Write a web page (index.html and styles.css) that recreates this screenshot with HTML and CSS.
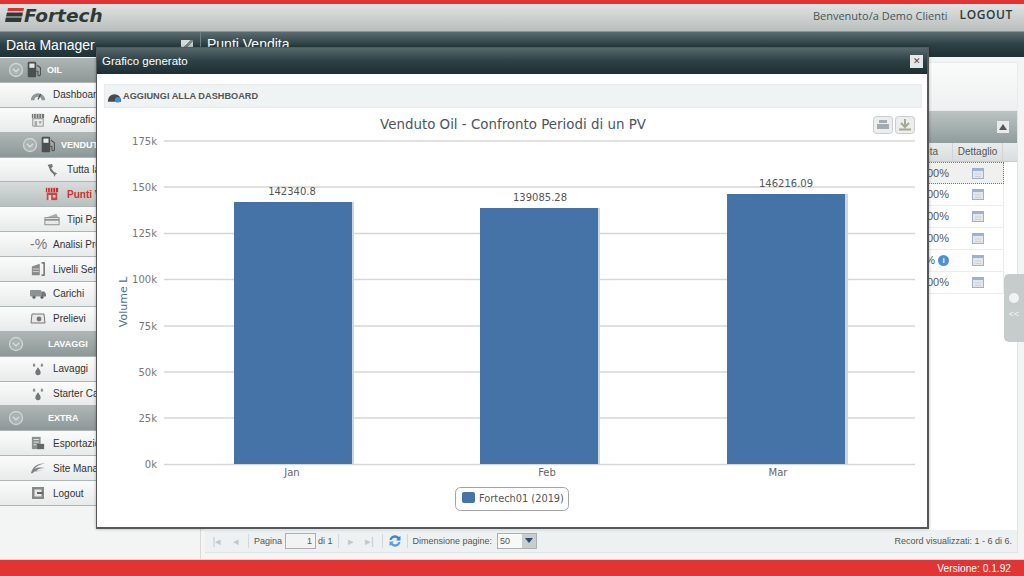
FILE: index.html
```html
<!DOCTYPE html>
<html lang="en">

<head>
    <meta charset="UTF-8">
    <meta name="viewport" content="width=device-width, initial-scale=1.0">
    <title>Fortech - Data Manager</title>
    <link rel="stylesheet" href="styles.css">
</head>

<body>
    <svg class="icon-defs" aria-hidden="true">
        <symbol id="i-chevron" viewBox="0 0 16 16">
            <circle cx="8" cy="8" r="6.5" fill="#aab3b2" stroke="#cfd5d4" stroke-width="1.3" />
            <path d="M4.8 6.8 8 9.8l3.2-3" fill="none" stroke="#d5dad9" stroke-width="1.5" />
        </symbol>
        <symbol id="i-pump" viewBox="0 0 20 20">
            <rect x="2" y="1" width="10" height="18" rx="1.5" fill="#4a4f50" />
            <rect x="4" y="3" width="6" height="5" fill="#e6e9e9" />
            <path d="M13 5l4 3v8c0 2-3 2-3 0v-4h-2" fill="none" stroke="#4a4f50" stroke-width="1.2" />
        </symbol>
        <symbol id="i-gauge" viewBox="0 0 18 14">
            <path d="M1 13a8 8 0 0 1 16 0h-4a4 4 0 0 0-8 0z" fill="#8f9696" />
            <path d="M9 12l3-6" stroke="#4e5454" stroke-width="1.4" />
        </symbol>
        <symbol id="i-shop" viewBox="0 0 16 16">
            <path d="M1 1h14v5H1z" fill="#777" />
            <path d="M3 1v5M6 1v5M9 1v5M12 1v5" stroke="#ddd" />
            <path d="M2 6.5h12V15H2z" fill="#eee" stroke="#888" />
            <path d="M4 9h3v6H4zM9 9h3v3H9z" fill="#aaa" />
        </symbol>
        <symbol id="i-shop-red" viewBox="0 0 16 16">
            <path d="M1 1h14v5H1z" fill="#c4302f" />
            <path d="M3 1v5M6 1v5M9 1v5M12 1v5" stroke="#f0c0c0" />
            <path d="M2 6.5h12V15H2z" fill="#c4484a" />
            <path d="M4 9h3v6H4zM9 9h3v3H9z" fill="#f2d6d6" />
        </symbol>
        <symbol id="i-italy" viewBox="0 0 16 16">
            <path d="M3 2l5-1 1 3-2 2 3 4 4 2-2 1-1 3-1-3-4-4-1-3z" fill="#777" />
        </symbol>
        <symbol id="i-card" viewBox="0 0 18 14">
            <path d="M1 6l13-5 2 4z" fill="#aaa" />
            <rect x="1" y="5.5" width="16" height="8" fill="#e8e8e8" stroke="#888" />
            <path d="M1 8h16" stroke="#777" stroke-width="1.5" />
        </symbol>
        <symbol id="i-tank" viewBox="0 0 16 16">
            <path d="M1 5l9-3v13H1z" fill="#888" />
            <path d="M2 8h7M2 11h7" stroke="#ddd" />
            <path d="M12 1h3v14h-3" fill="none" stroke="#555" stroke-width="1.4" />
        </symbol>
        <symbol id="i-truck" viewBox="0 0 20 12">
            <rect x="0" y="1" width="14" height="8" rx="1" fill="#8d9393" />
            <path d="M14 3h4l2 3v3h-6z" fill="#777" />
            <circle cx="5" cy="10" r="2" fill="#666" />
            <circle cx="15" cy="10" r="2" fill="#666" />
        </symbol>
        <symbol id="i-cash" viewBox="0 0 16 12">
            <path d="M2 1h12l1 9H1z" fill="#e8e8e8" stroke="#777" />
            <circle cx="9" cy="6" r="2.4" fill="#777" />
        </symbol>
        <symbol id="i-drops" viewBox="0 0 14 16">
            <path d="M7 6c2 3 3 4 3 6a3 3 0 0 1-6 0c0-2 1-3 3-6z" fill="#707777" />
            <path d="M2.5 1c1 1.5 1.5 2 1.5 3a1.5 1.5 0 0 1-3 0c0-1 .5-1.5 1.500-3zM11.5 1c1 1.5 1.5 2 1.5 3a1.5 1.5 0 0 1-3 0c0-1 .5-1.5 1.5-3z" fill="#8b9292" />
        </symbol>
        <symbol id="i-export" viewBox="0 0 16 16">
            <path d="M1 1h10v14H1z" fill="#8b9090" />
            <path d="M3 4h6M3 7h6M3 10h3" stroke="#eee" />
            <rect x="7" y="9" width="8" height="6" fill="#666" />
        </symbol>
        <symbol id="i-eye" viewBox="0 0 18 14">
            <path d="M1 13C3 5 9 1 17 2 11 3 7 5 5 8c3-2 8-2 12-1-5 0-8 1-10 3l7 0-9 1-2 2z" fill="#7d8484" />
        </symbol>
        <symbol id="i-exit" viewBox="0 0 14 14">
            <rect x="1" y="1" width="12" height="12" fill="#888" />
            <rect x="3.5" y="3.5" width="7" height="7" fill="#e8e8e8" />
            <path d="M6 7h6" stroke="#666" stroke-width="2" />
        </symbol>
        <symbol id="i-detail" viewBox="0 0 12 11">
            <rect x=".5" y=".5" width="11" height="10" fill="#e3e6ea" stroke="#9db0cf" />
            <rect x="1" y="1" width="10" height="2" fill="#9db3d6" />
            <path d="M3 6h6M3 8.500h6" stroke="#cdd1d6" />
        </symbol>
    </svg>

    <div class="top-line"></div>
    <header class="app-header">
        <div class="logo">
            <svg class="logo-mark" viewBox="0 0 19 14" aria-hidden="true">
                <path d="M3 0h16l-.6 3H2.4z" fill="#d9322f" />
                <path d="M2 4.5h16l-.8 4H1z" fill="#2f3a38" />
                <path d="M.8 9.500h16l-.9 4.500H0z" fill="#2f3a38" />
            </svg>
            <span class="logo-text">Fortech</span>
        </div>
        <div class="user-box">
            <span class="welcome">Benvenuto/a Demo Clienti</span>
            <a class="logout-link">LOGOUT</a>
        </div>
    </header>

    <div class="title-bar">
        <div class="title-left">
            <span>Data Manager</span>
            <span class="collapse-btn"></span>
        </div>
        <div class="title-right">Punti Vendita</div>
    </div>

    <div class="app-body">
        <nav class="sidebar">
            <div class="menu-group"><svg class="chev"><use href="#i-chevron" /></svg><svg class="ico-pump"><use href="#i-pump" /></svg><span>OIL</span></div>
            <div class="menu-row"><svg class="ico"><use href="#i-gauge" /></svg><span>Dashboard</span></div>
            <div class="menu-row"><svg class="ico"><use href="#i-shop" /></svg><span>Anagrafica</span></div>
            <div class="menu-group sub"><svg class="chev"><use href="#i-chevron" /></svg><svg class="ico-pump"><use href="#i-pump" /></svg><span>VENDUTO</span></div>
            <div class="menu-row sub"><svg class="ico"><use href="#i-italy" /></svg><span>Tutta la rete</span></div>
            <div class="menu-row sub active"><svg class="ico"><use href="#i-shop-red" /></svg><span>Punti Vendita</span></div>
            <div class="menu-row sub"><svg class="ico"><use href="#i-card" /></svg><span>Tipi Pagamento</span></div>
            <div class="menu-row"><span class="ico-text">-%</span><span>Analisi Prezzi</span></div>
            <div class="menu-row"><svg class="ico"><use href="#i-tank" /></svg><span>Livelli Serbatoi</span></div>
            <div class="menu-row"><svg class="ico"><use href="#i-truck" /></svg><span>Carichi</span></div>
            <div class="menu-row"><svg class="ico"><use href="#i-cash" /></svg><span>Prelievi</span></div>
            <div class="menu-group"><svg class="chev"><use href="#i-chevron" /></svg><span class="no-ico">LAVAGGI</span></div>
            <div class="menu-row"><svg class="ico"><use href="#i-drops" /></svg><span>Lavaggi</span></div>
            <div class="menu-row"><svg class="ico"><use href="#i-drops" /></svg><span>Starter Card</span></div>
            <div class="menu-group"><svg class="chev"><use href="#i-chevron" /></svg><span class="no-ico">EXTRA</span></div>
            <div class="menu-row"><svg class="ico"><use href="#i-export" /></svg><span>Esportazioni</span></div>
            <div class="menu-row"><svg class="ico"><use href="#i-eye" /></svg><span>Site Manager</span></div>
            <div class="menu-row"><svg class="ico"><use href="#i-exit" /></svg><span>Logout</span></div>
        </nav>

        <main class="content">
            <div class="filter-box"></div>
            <section class="grid">
                <div class="grid-caption"><span class="caption-btn"></span></div>
                <div class="grid-head">
                    <div class="cell-main">Venduta</div>
                    <div class="cell-detail">Dettaglio</div>
                </div>
                <div class="grid-row selected"><div class="cell-main">100%</div><div class="cell-detail"><svg class="detail-ico"><use href="#i-detail" /></svg></div></div>
                <div class="grid-row"><div class="cell-main">100%</div><div class="cell-detail"><svg class="detail-ico"><use href="#i-detail" /></svg></div></div>
                <div class="grid-row"><div class="cell-main">100%</div><div class="cell-detail"><svg class="detail-ico"><use href="#i-detail" /></svg></div></div>
                <div class="grid-row"><div class="cell-main">100%</div><div class="cell-detail"><svg class="detail-ico"><use href="#i-detail" /></svg></div></div>
                <div class="grid-row"><div class="cell-main with-info">%<span class="info-dot">i</span></div><div class="cell-detail"><svg class="detail-ico"><use href="#i-detail" /></svg></div></div>
                <div class="grid-row"><div class="cell-main">100%</div><div class="cell-detail"><svg class="detail-ico"><use href="#i-detail" /></svg></div></div>
                <div class="grid-fill"></div>
                <div class="pager">
                    <span class="pg-arrow">|&#9666;</span>
                    <span class="pg-arrow">&#9666;</span>
                    <span class="pg-sep"></span>
                    <span>Pagina</span>
                    <span class="pg-input">1</span>
                    <span>di 1</span>
                    <span class="pg-sep"></span>
                    <span class="pg-arrow">&#9656;</span>
                    <span class="pg-arrow">&#9656;|</span>
                    <span class="pg-sep"></span>
                    <svg class="pg-refresh" viewBox="0 0 14 14" aria-hidden="true">
                        <path d="M1.5 6a5.5 5.5 0 0 1 9.5-3l1.5-1v4.5H8L9.5 5a3.5 3.5 0 0 0-6 1z" fill="#3f86c9" />
                        <path d="M12.5 8a5.5 5.5 0 0 1-9.5 3l-1.5 1V7.5H6L4.5 9a3.5 3.5 0 0 0 6-1z" fill="#5aa0dc" />
                    </svg>
                    <span class="pg-sep"></span>
                    <span>Dimensione pagine:</span>
                    <span class="pg-select"><span class="pg-value">50</span><span class="pg-drop"></span></span>
                    <span class="pg-record">Record visualizzati: 1 - 6 di 6.</span>
                </div>
            </section>
        </main>
    </div>

    <footer class="app-footer">Versione: 0.1.92</footer>

    <div class="slide-tab"><span class="slide-knob"></span><span class="slide-arrows">&lt;&lt;</span></div>

    <div class="modal">
        <div class="modal-title">
            <span>Grafico generato</span>
            <span class="modal-close">&#10005;</span>
        </div>
        <div class="modal-toolbar">
            <svg class="add-ico" viewBox="0 0 16 13" aria-hidden="true">
                <path d="M1 11a7 7 0 0 1 14 0v1H1z" fill="#474b4e" />
                <circle cx="11.5" cy="10" r="3" fill="#3b8fd6" />
            </svg>
            <span>AGGIUNGI ALLA DASHBOARD</span>
        </div>
        <!-- viewBox uses page coordinates, easier to compare with the screenshot -->
        <svg class="chart" viewBox="97 108 830 419" role="img">
            <text class="chart-title" x="513" y="128.500">Venduto Oil - Confronto Periodi di un PV</text>

            <g class="chart-btn">
                <rect x="873.5" y="116.5" width="19" height="17" rx="3" />
                <rect x="895.5" y="116.5" width="19" height="17" rx="3" />
            </g>
            <path d="M877 124h12v5h-12zM879 120h8v3h-8z" fill="#a3aab2" />
            <path d="M905 119v7M901 123l4 4 4-4M899 129.500h12" fill="none" stroke="#a6a88f" stroke-width="2" />

            <g class="grid-lines">
                <path d="M164 141H915" />
                <path d="M164 187H915" />
                <path d="M164 233.5H915" />
                <path d="M164 279.5H915" />
                <path d="M164 326H915" />
                <path d="M164 372H915" />
                <path d="M164 418H915" />
                <path d="M164 464.5H915" />
            </g>

            <g class="y-labels">
                <text x="157" y="145">175k</text>
                <text x="157" y="191">150k</text>
                <text x="157" y="237">125k</text>
                <text x="157" y="283">100k</text>
                <text x="157" y="330">75k</text>
                <text x="157" y="376">50k</text>
                <text x="157" y="422">25k</text>
                <text x="157" y="468">0k</text>
            </g>
            <text class="y-title" transform="translate(127 302) rotate(-90)">Volume L</text>

            <g class="bar-shadow">
                <rect x="351" y="202" width="3" height="262" />
                <rect x="597" y="208" width="3" height="256" />
                <rect x="845" y="194" width="3" height="270" />
            </g>
            <g class="bars">
                <rect x="234" y="202" width="118" height="262" />
                <rect x="480" y="208" width="118" height="256" />
                <rect x="727" y="194" width="118" height="270" />
            </g>

            <g class="bar-labels">
                <text x="292" y="195">142340.8</text>
                <text x="540" y="201">139085.28</text>
                <text x="786" y="187">146216.09</text>
            </g>
            <g class="x-labels">
                <text x="292" y="476">Jan</text>
                <text x="547" y="476">Feb</text>
                <text x="778" y="476">Mar</text>
            </g>

            <rect class="legend-box" x="455.5" y="487.5" width="113" height="23" rx="5" />
            <rect class="legend-swatch" x="462" y="492" width="13" height="11" rx="2" />
            <text class="legend-text" x="479" y="502">Fortech01 (2019)</text>
        </svg>
    </div>
</body>

</html>
```

FILE: styles.css
```css
* {
    box-sizing: border-box;
}

html,
body {
    height: 100%;
}

body {
    margin: 0;
    display: flex;
    flex-direction: column;
    height: 576px;
    overflow: hidden;
    font-family: "Liberation Sans", Arial, sans-serif;
    font-size: 10px;
    color: #333;
    background: #f3f5f5;
}

.icon-defs {
    position: absolute;
    width: 0;
    height: 0;
}

.top-line {
    height: 4px;
    background: #e23434;
}

.app-header {
    height: 28px;
    display: flex;
    justify-content: space-between;
    align-items: center;
    padding: 0 11px 5px 5px;
    background: linear-gradient(to bottom, #dfe2e1 0%, #b9bfbe 100%);
    border-bottom: 1px solid #8d9594;
}

.logo {
    display: flex;
    align-items: center;
}

.logo-mark {
    width: 19px;
    height: 14px;
}

.logo-text {
    font-family: "DejaVu Sans", sans-serif;
    font-weight: bold;
    font-style: italic;
    font-size: 18.5px;
    color: #2f3a38;
    margin-left: 0;
}

.user-box {
    display: flex;
    align-items: center;
    gap: 12px;
}

.welcome {
    font-family: "Open Sans", sans-serif;
    font-size: 11px;
    color: #46575a;
}

.logout-link {
    font-family: "Open Sans", sans-serif;
    font-weight: 600;
    font-size: 12px;
    letter-spacing: .6px;
    color: #2e3a3c;
    margin-top: -2px;
}

.title-bar {
    height: 25px;
    display: flex;
    flex: none;
    color: #fff;
    font-size: 14px;
    background: linear-gradient(to bottom, #5a6c70 0%, #2d4045 50%, #1f3034 100%);
}

.title-left {
    width: 201px;
    display: flex;
    justify-content: space-between;
    align-items: center;
    padding: 0 7px 0 6px;
    border-right: 1px solid #728084;
}

.collapse-btn {
    width: 12px;
    height: 10px;
    background: linear-gradient(135deg, #d5dada 0 45%, #7c8888 45% 60%, #c5cccc 60%);
}

.title-right {
    padding: 0 6px;
    line-height: 24px;
}

.app-body {
    flex: 1;
    display: flex;
    min-height: 0;
}

.sidebar {
    width: 201px;
    flex: none;
    padding-top: 1px;
    background: #f3f5f5;
    border-right: 1px solid #d5dada;
}

.menu-group,
.menu-row {
    height: 24.9px;
    display: flex;
    align-items: center;
    white-space: nowrap;
    border-bottom: 1px solid #adb4b4;
}

.menu-group {
    padding-left: 8px;
    font-size: 9px;
    font-weight: bold;
    color: #fff;
    background: linear-gradient(to bottom, #aeb6b5 0%, #8c9897 100%);
}

.menu-group.sub {
    padding-left: 22px;
}

.chev {
    width: 16px;
    height: 16px;
    margin-right: 2px;
}

.ico-pump {
    width: 17px;
    height: 17px;
    margin-right: 4px;
}

.no-ico {
    margin-left: 22px;
}

.menu-row {
    padding-left: 30px;
    background: linear-gradient(to bottom, #fbfbfb 0%, #e8ebeb 100%);
}

.menu-row.sub {
    padding-left: 44px;
}

.menu-row.active {
    color: #d8302e;
    font-weight: bold;
    background: linear-gradient(to bottom, #d7dcdb 0%, #b8c1c0 100%);
}

.ico {
    width: 16px;
    height: 14px;
    margin-right: 7px;
}

.ico-text {
    width: 16px;
    margin-right: 7px;
    font-size: 14px;
    color: #777;
}

.content {
    flex: 1;
    min-width: 0;
    display: flex;
    flex-direction: column;
    padding: 5px 6px 6px 4px;
    background: #f3f5f5;
}

.filter-box {
    height: 49px;
    flex: none;
    background: linear-gradient(to bottom, #fafbfb 0%, #eef1f1 100%);
    border: 1px solid #e8ecec;
}

.grid {
    flex: 1;
    display: flex;
    flex-direction: column;
    min-height: 0;
    background: #fff;
    border-right: 1px solid #dfe4e4;
}

.grid-caption {
    height: 32px;
    flex: none;
    display: flex;
    justify-content: flex-end;
    align-items: center;
    padding-right: 8px;
    background: linear-gradient(to bottom, #bcc4c3 0%, #8f9c9b 100%);
}

.caption-btn {
    width: 12px;
    height: 12px;
    background: #e8ebeb;
    position: relative;
}

.caption-btn::after {
    content: "";
    position: absolute;
    left: 2px;
    top: 3px;
    border: 4px solid transparent;
    border-top: 0;
    border-bottom: 6px solid #555;
}

.grid-head,
.grid-row {
    display: flex;
    width: 799px;
    flex: none;
}

.grid-head {
    width: 100%;
    height: 19px;
    line-height: 18px;
    color: #555;
    padding-right: 14px;
    background: linear-gradient(to bottom, #e9ecec 0%, #d9dddd 100%);
    border-bottom: 1px solid #c4caca;
}

.grid-head .cell-main {
    padding-right: 14px;
}

.grid-head .cell-detail {
    border-left: 1px solid #cfd4d4;
    border-right: 1px solid #cfd4d4;
}

.grid-row {
    height: 22px;
    line-height: 21px;
    font-size: 11px;
    color: #555;
    border-bottom: 1px solid #eaeded;
    border-right: 1px solid #eaeded;
}

.grid-row.selected {
    background: #f0f0ee;
    border: 1px dotted #777;
}

.cell-main {
    flex: 1;
    text-align: right;
    padding-right: 3px;
}

.with-info {
    display: flex;
    justify-content: flex-end;
    align-items: center;
    gap: 3px;
}

.info-dot {
    width: 11px;
    height: 11px;
    border-radius: 50%;
    background: #4a90d9;
    color: #fff;
    font-size: 8px;
    line-height: 11px;
    text-align: center;
    font-weight: bold;
}

.cell-detail {
    width: 51px;
    flex: none;
    text-align: center;
}

.detail-ico {
    width: 12px;
    height: 11px;
    vertical-align: middle;
    position: relative;
    top: -1px;
}

.grid-fill {
    flex: 1;
}

.pager {
    height: 23px;
    flex: none;
    display: flex;
    align-items: center;
    gap: 5px;
    padding: 0 5px;
    font-size: 9px;
    white-space: nowrap;
    color: #555;
    background: #eef1f1;
    border-bottom: 1px solid #dfe4e8;
}

.pg-arrow {
    width: 14px;
    text-align: center;
    font-size: 11px;
    color: #c3c8c8;
}

.pg-sep {
    width: 1px;
    height: 14px;
    background: #cfd8e0;
}

.pg-input {
    width: 31px;
    height: 16px;
    line-height: 15px;
    text-align: right;
    margin: 0 -3px 0 -2px;
    padding-right: 3px;
    background: #f2f4f4;
    border: 1px solid #aab0b0;
}

.pg-refresh {
    width: 14px;
    height: 14px;
}

.pg-select {
    width: 40px;
    height: 16px;
    display: flex;
    justify-content: space-between;
    background: #f7f8f8;
    border: 1px solid #aab0b0;
}

.pg-value {
    padding-left: 2px;
    line-height: 14px;
}

.pg-drop {
    width: 14px;
    background: #c8cdcd;
    position: relative;
}

.pg-drop::after {
    content: "";
    position: absolute;
    left: 3px;
    top: 4px;
    border: 4px solid transparent;
    border-bottom: 0;
    border-top: 5px solid #2c4a6e;
}

.pg-record {
    margin-left: auto;
}

.app-footer {
    height: 17px;
    flex: none;
    padding-right: 13px;
    line-height: 18px;
    font-size: 10.2px;
    text-align: right;
    color: #fff;
    background: #e23434;
    border-top: 1px solid #f3c8c8;
}

/* things that lie over the page */
.slide-tab {
    position: absolute;
    right: 0;
    top: 274px;
    width: 20px;
    height: 68px;
    display: flex;
    flex-direction: column;
    align-items: center;
    padding-top: 19px;
    border-radius: 5px 0 0 5px;
    background: #c6cccb;
}

.slide-knob {
    width: 10px;
    height: 10px;
    border-radius: 50%;
    background: #f1f3f3;
}

.slide-arrows {
    margin-top: 6px;
    font-size: 9px;
    color: #f1f3f3;
}

.modal {
    position: absolute;
    left: 96px;
    top: 47px;
    width: 833px;
    height: 482px;
    display: flex;
    flex-direction: column;
    background: #fff;
    border: 1px solid #55595a;
    border-width: 1px 2px 2px 1px;
    box-shadow: 0 0 3px rgba(0, 0, 0, .3);
}

.modal-title {
    height: 26px;
    flex: none;
    display: flex;
    justify-content: space-between;
    align-items: center;
    padding: 0 4px 0 5px;
    color: #fff;
    font-size: 11.5px;
    background: linear-gradient(to bottom, #56686c 0%, #2d4045 50%, #1f3034 100%);
}

.modal-close {
    width: 13px;
    height: 13px;
    line-height: 13px;
    text-align: center;
    font-size: 9px;
    color: #445;
    background: #e4e8e8;
}

.modal-toolbar {
    height: 24px;
    flex: none;
    display: flex;
    align-items: center;
    gap: 1px;
    margin: 10px 5px 0 7px;
    padding-left: 2px;
    font-size: 9.2px;
    font-weight: bold;
    color: #555;
    background: #eff3f3;
    border: 1px solid #e7ebeb;
}

.add-ico {
    width: 15px;
    height: 13px;
}

.chart {
    display: block;
    width: 830px;
    height: 419px;
    font-family: "DejaVu Sans", sans-serif;
}

.chart-title {
    font-size: 13.4px;
    fill: #4a545c;
    text-anchor: middle;
}

.chart-btn rect {
    fill: #eceeee;
    stroke: #c8cccc;
}

.grid-lines path {
    fill: none;
    stroke: #d6d6d6;
    stroke-width: 1.5;
}

.y-labels text {
    font-size: 10px;
    fill: #777;
    text-anchor: end;
}

.y-title {
    font-size: 11px;
    fill: #4d6f98;
    text-anchor: middle;
}

.bars rect {
    fill: #4572a7;
}

.bar-shadow rect {
    fill: #cbd5e3;
}

.bar-labels text {
    font-size: 10px;
    fill: #555;
    text-anchor: middle;
}

.x-labels text {
    font-size: 10px;
    fill: #666;
    text-anchor: middle;
}

.legend-box {
    fill: #fff;
    stroke: #a4a4a4;
}

.legend-swatch {
    fill: #4572a7;
}

.legend-text {
    font-size: 9.8px;
    fill: #555;
}
```
